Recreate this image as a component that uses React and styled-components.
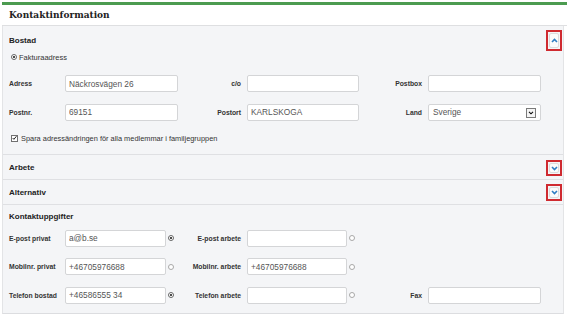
import React from 'react'
import styled, { createGlobalStyle } from 'styled-components'

const GlobalStyle = createGlobalStyle`
  body {
    margin: 0;
    background: #ffffff;
    font-family: "Liberation Sans", Arial, sans-serif;
  }
`

const Page = styled.div`
  width: 570px;
  box-sizing: border-box;
  padding: 2px 3px 0 2px;
`

const Header = styled.div`
  width: 565px;
  height: 20px;
  box-sizing: content-box;
  display: flex;
  align-items: center;
  padding-left: 0;
  background: #ffffff;
  border-top: 3px solid #4c9b50;
  border-bottom: 1px solid #dedfe1;
`

const HeaderTitle = styled.h1`
  margin: 0 0 0 7px;
  font-family: "DejaVu Serif", Georgia, serif;
  font-size: 9px;
  font-weight: bold;
  color: #222;
`

const Body = styled.div`
  width: 560px;
  background: #f4f5f7;
  border-left: 1px solid #e3e4e6;
  border-right: 1px solid #e3e4e6;
  border-bottom: 1px solid #dcdde0;
`

const Section = styled.section`
  padding: ${p => p.$pad || '0 1px 0 6px'};
  border-bottom: ${p => (p.$last ? 'none' : '1px solid #dfe0e3')};
`

const SectionHead = styled.div`
  display: flex;
  align-items: center;
  justify-content: space-between;
  height: ${p => p.$h || 24}px;
`

const SectionTitle = styled.h2`
  margin: 0;
  font-size: 8px;
  font-weight: bold;
  color: #222;
`

const ToggleFrame = styled.div`
  box-sizing: border-box;
  width: 16px;
  height: ${p => p.$h}px;
  margin-top: ${p => p.$offset || 0}px;
  border: 2px solid #cf2a30;
  padding: 1px;
  display: flex;
`

const ToggleButton = styled.button`
  flex: 1;
  padding: 0;
  border: 1px solid #dcdcdc;
  border-radius: 2px;
  background: #fbfbfb;
  display: flex;
  align-items: center;
  justify-content: center;
  cursor: pointer;
`

const Choice = styled.label`
  display: flex;
  align-items: center;
  height: 10px;
  margin-top: ${p => p.$mt || 0}px;
  font-size: ${p => p.$fs || 7.5}px;
  color: #333;
`

const RadioDot = styled.span`
  box-sizing: border-box;
  flex: none;
  width: 6px;
  height: 6px;
  margin: ${p => p.$margin || '0 2px 0 2px'};
  border-radius: 50%;
  border: 1px solid ${p => (p.$on ? '#666' : '#a8a8a8')};
  background: #fff;
  display: flex;
  align-items: center;
  justify-content: center;
  &::after {
    content: '';
    width: 2px;
    height: 2px;
    border-radius: 50%;
    background: ${p => (p.$on ? '#111' : 'transparent')};
  }
`

const CheckBox = styled.span`
  box-sizing: border-box;
  flex: none;
  width: 7px;
  height: 7px;
  margin: 0 3px 0 2px;
  border: 1px solid #707070;
  background: #fff;
  display: flex;
  align-items: center;
  justify-content: center;
`

const FieldGrid = styled.div`
  display: grid;
  grid-template-columns: 56px 113px 69px 112px 69px 113px;
  grid-auto-rows: 17px;
  row-gap: 11.5px;
  margin-top: ${p => p.$mt}px;
  align-items: center;
`

const Label = styled.span`
  font-size: 6.8px;
  font-weight: bold;
  color: #333;
  white-space: nowrap;
  text-align: ${p => (p.$right ? 'right' : 'left')};
  padding-right: ${p => (p.$right ? 6 : 0)}px;
`

const Cell = styled.div`
  display: flex;
  align-items: center;
  height: 17px;
`

const Input = styled.input`
  box-sizing: border-box;
  width: ${p => p.$w || 113}px;
  height: 17px;
  margin: 0;
  padding: 0 3px;
  border: 1px solid #d4d5d7;
  border-radius: 2px;
  background: #fff;
  font-family: "Liberation Sans", Arial, sans-serif;
  font-size: 8.3px;
  color: #555;
  outline: none;
`

const SelectBox = styled.div`
  position: relative;
  box-sizing: border-box;
  width: 113px;
  height: 17px;
  padding-left: 4px;
  display: flex;
  align-items: center;
  border: 1px solid #d4d5d7;
  border-radius: 2px;
  background: #fff;
  font-size: 8.3px;
  color: #555;
`

const SelectArrow = styled.span`
  position: absolute;
  right: 4px;
  top: 3px;
  box-sizing: border-box;
  width: 10px;
  height: 10px;
  border: 1px solid #7a7a7a;
  background: #f4f4f4;
  display: flex;
  align-items: center;
  justify-content: center;
`

const Chevron = ({ up, color = '#2f7dc2', w = 7, h = 5, sw = 1.6 }) => (
  <svg width={w} height={h} viewBox="0 0 7 5">
    <path
      d={up ? 'M1 4 L3.5 1.5 L6 4' : 'M1 1 L3.5 3.5 L6 1'}
      fill="none"
      stroke={color}
      strokeWidth={sw}
    />
  </svg>
)

const Toggle = ({ up, h, offset }) => (
  <ToggleFrame $h={h} $offset={offset}>
    <ToggleButton type="button" aria-label="toggle">
      <Chevron up={up} />
    </ToggleButton>
  </ToggleFrame>
)

const RadioInput = ({ value, on, w = 101 }) => (
  <Cell>
    <Input $w={w} defaultValue={value} />
    <RadioDot $on={on} $margin="0 0 0 2px" />
  </Cell>
)

const App = () => (
  <>
    <GlobalStyle />
    <Page>
      <Header>
        <HeaderTitle>Kontaktinformation</HeaderTitle>
      </Header>
      <Body>
        <Section $pad="4px 1px 11px 6px">
          <SectionHead $h={21}>
            <SectionTitle>Bostad</SectionTitle>
            <Toggle up h={21} />
          </SectionHead>
          <Choice $mt={1}>
            <RadioDot $on />
            Fakturaadress
          </Choice>
          <FieldGrid $mt={13}>
            <Label>Adress</Label>
            <Cell><Input defaultValue="Näckrosvägen 26" /></Cell>
            <Label $right>c/o</Label>
            <Cell><Input $w={112} /></Cell>
            <Label $right>Postbox</Label>
            <Cell><Input /></Cell>

            <Label>Postnr.</Label>
            <Cell><Input defaultValue="69151" /></Cell>
            <Label $right>Postort</Label>
            <Cell><Input $w={112} defaultValue="KARLSKOGA" /></Cell>
            <Label $right>Land</Label>
            <Cell>
              <SelectBox>
                Sverige
                <SelectArrow>
                  <Chevron color="#111" w={6} h={4} sw={1.4} />
                </SelectArrow>
              </SelectBox>
            </Cell>
          </FieldGrid>
          <Choice $mt={12.5} $fs={7.4}>
            <CheckBox>
              <svg width="6" height="6" viewBox="0 0 6 6">
                <path d="M0.8 3 L2.3 4.6 L5.3 0.9" fill="none" stroke="#222" strokeWidth="1.2" />
              </svg>
            </CheckBox>
            Spara adressändringen för alla medlemmar i familjegruppen
          </Choice>
        </Section>

        <Section>
          <SectionHead>
            <SectionTitle>Arbete</SectionTitle>
            <Toggle h={16} offset={2} />
          </SectionHead>
        </Section>

        <Section>
          <SectionHead>
            <SectionTitle>Alternativ</SectionTitle>
            <Toggle h={17} />
          </SectionHead>
        </Section>

        <Section $last $pad="6px 1px 9px 6px">
          <SectionHead $h={10}>
            <SectionTitle>Kontaktuppgifter</SectionTitle>
          </SectionHead>
          <FieldGrid $mt={8.5}>
            <Label>E-post privat</Label>
            <RadioInput value="a@b.se" on />
            <Label $right>E-post arbete</Label>
            <RadioInput w={100} />
            <span />
            <span />

            <Label>Mobilnr. privat</Label>
            <RadioInput value="+46705976688" />
            <Label $right>Mobilnr. arbete</Label>
            <RadioInput w={100} value="+46705976688" />
            <span />
            <span />

            <Label>Telefon bostad</Label>
            <RadioInput value="+46586555 34" on />
            <Label $right>Telefon arbete</Label>
            <RadioInput w={100} />
            <Label $right>Fax</Label>
            <Cell><Input /></Cell>
          </FieldGrid>
        </Section>
      </Body>
    </Page>
  </>
)

export default App
